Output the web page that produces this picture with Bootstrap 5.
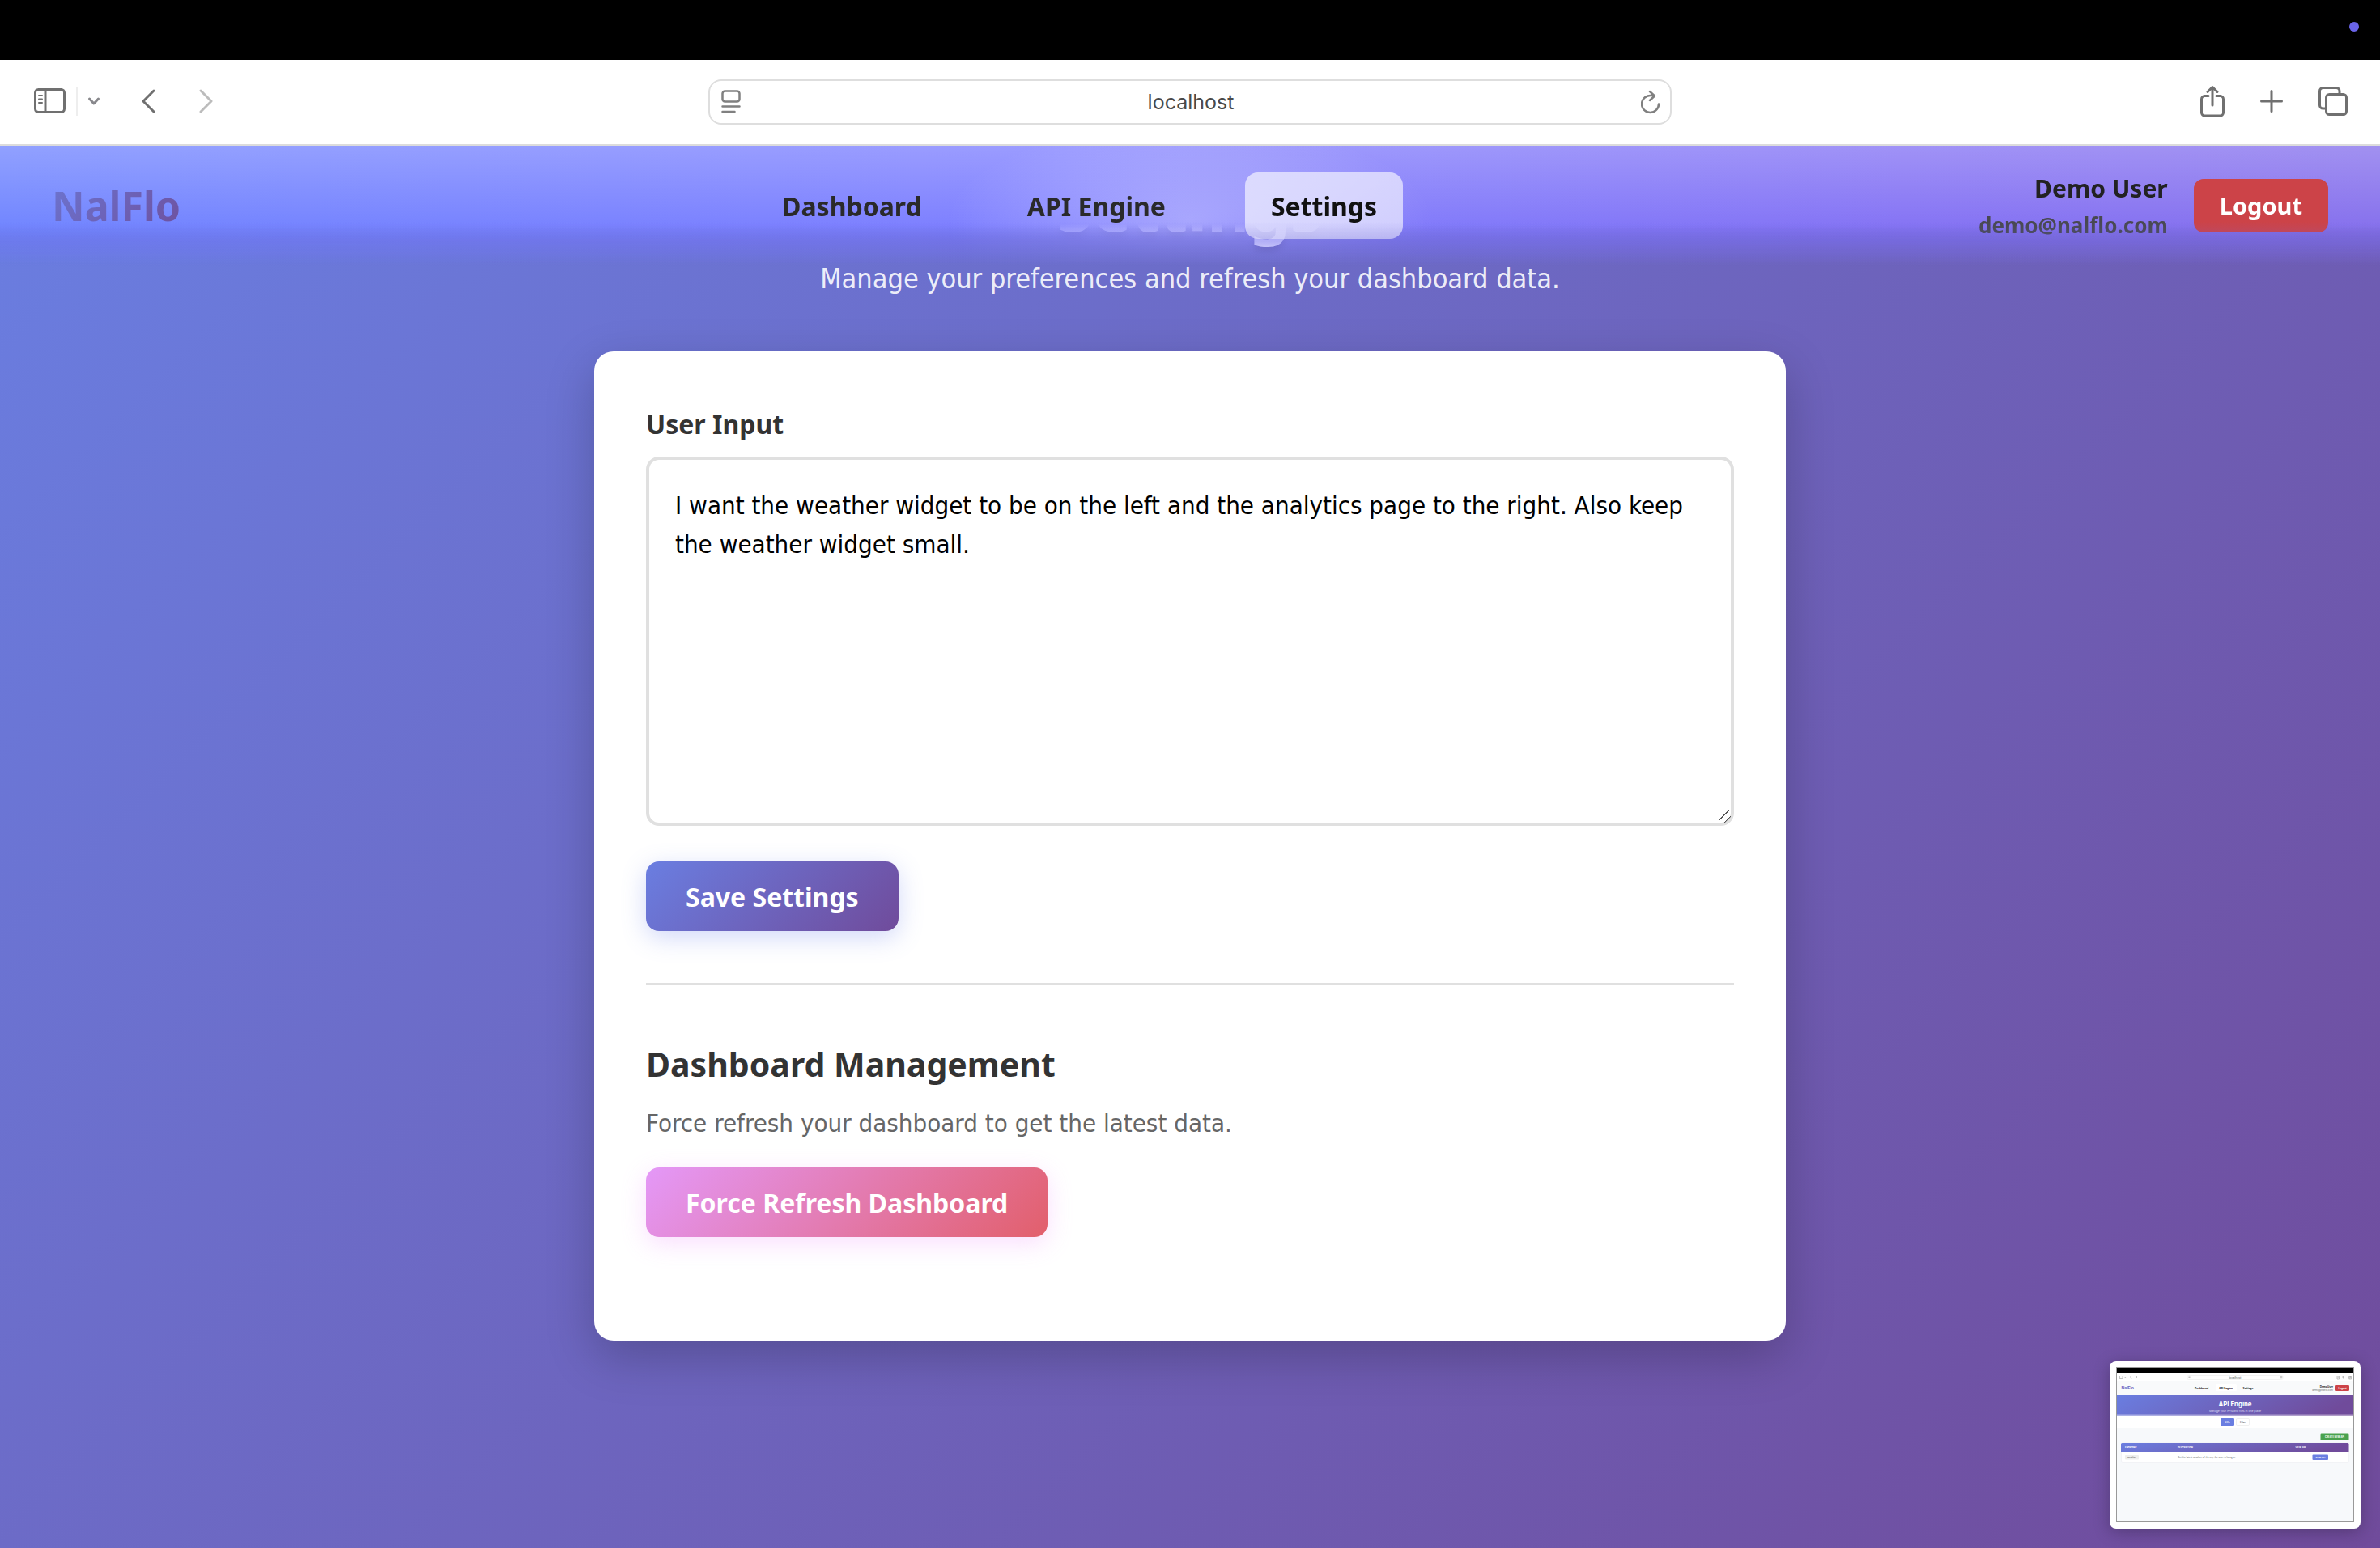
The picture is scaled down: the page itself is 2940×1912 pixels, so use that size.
<!DOCTYPE html>
<html lang="en">
<head>
<meta charset="utf-8">
<meta name="viewport" content="width=device-width, initial-scale=1">
<title>NalFlo – Settings</title>
<link href="https://cdn.jsdelivr.net/npm/bootstrap@5.3.0/dist/css/bootstrap.min.css" rel="stylesheet">
<style>
  :root {
    --text-face: "DejaVu Sans Condensed", "Noto Sans", sans-serif;
    --bold-face: "Noto Sans", "Open Sans", sans-serif;
  }
  body { font-family: var(--text-face); font-size: 31px; line-height: 50px; color: #333; font-variant-ligatures: none; }

  /* Browser chrome */
  .menu-strip { height: 74px; padding-right: 26px; }
  .rec-dot { width: 12px; height: 12px; background: #6a64e8; }
  .browser-bar { display: grid; grid-template-columns: 1fr 1190px 1fr; height: 106px; padding: 24px 40px 0; border-bottom: 2px solid #dcdcdc; align-items: start; }
  .browser-bar svg { display: block; fill: none; stroke: #707070; stroke-width: 3; stroke-linecap: round; stroke-linejoin: round; }
  .tool-btn { background: none; border: 0; padding: 0; }
  .tool-row { height: 54px; }
  .tool-set { gap: 44px; }
  .bar-rule { width: 2px; height: 36px; background: #eee; margin-left: 13px; margin-right: 12px; }
  .url-box { height: 56px; border: 2px solid #dedede; border-radius: 16px; padding: 0 12px 0 14px; }
  .url-box svg { stroke: #808080; }
  .url-box input { border: 0; outline: 0; background: none; min-width: 0; font: 25px/36px Inter, sans-serif; color: #4a4a4a; }

  /* Page and translucent nav */
  .app-page { background: linear-gradient(135deg, #6a7ee1 0%, #704b9b 100%); }
  .app-nav { height: 148px; padding: 0 64px; z-index: 5; }
  .nav-glass { position: absolute; inset: 0 0 auto 0; height: 97px; backdrop-filter: blur(28px); }
  .nav-tint { position: absolute; inset: 0;
    background:
      radial-gradient(ellipse 300px 120px at 50% 92px, rgba(255,255,255,.30), rgba(255,255,255,0)),
      linear-gradient(rgba(255,255,255,.24), rgba(255,255,255,0) 112px),
      linear-gradient(90deg, #6e83ff, #7c7cff 45%, #8270f4 80%, #846eec);
    mask-image: linear-gradient(#000 97px, rgba(0,0,0,.66) 112px, rgba(0,0,0,.36) 126px, transparent 148px);
    -webkit-mask-image: linear-gradient(#000 97px, rgba(0,0,0,.66) 112px, rgba(0,0,0,.36) 126px, transparent 148px); }
  .nav-fade { position: absolute; inset: 0; pointer-events: none; background: linear-gradient(rgba(110,104,225,0) 94px, rgba(110,104,225,.24) 118px, rgba(110,104,225,0) 148px); }
  .brand { font: 700 50px/82px var(--bold-face); background: linear-gradient(135deg, #6c76d2, #6e4f9c); background-clip: text; -webkit-background-clip: text; color: transparent; text-decoration: none; }
  .main-links { gap: 66px; }
  .main-links a { font: 700 32px/50px var(--bold-face); color: #2a2a2a; padding: 17px 32px 15px; border-radius: 16px; text-decoration: none; }
  .main-links a.active { color: #111; background: rgba(255,255,255,.62); }
  .user-name { font: 700 30px/48px var(--bold-face); color: #222; }
  .user-mail { font: 700 26px/42px var(--bold-face); color: #484850; }
  .logout-btn { font: 700 29px/42px var(--bold-face); color: #fff; background: #cc4348; border: 0; border-radius: 12px; padding: 12px 32px; }

  /* Settings content */
  .settings-main { padding: 27px 0 120px; }
  .settings-main h1 { font: 700 80px/96px var(--bold-face); color: #fff; margin: 0; text-shadow: 0 4px 8px rgba(0,0,0,.2); }
  .sub-line { font-size: 34px; line-height: 54px; color: rgba(255,255,255,.9); margin: 14px 0 63px; }
  .settings-card { width: 1472px; max-width: 96%; background: #fff; border-radius: 24px; padding: 64px; box-shadow: 0 20px 60px rgba(0,0,0,.22); }
  .field-label { font: 700 32px/52px var(--bold-face); margin-bottom: 14px; display: block; }
  .pref-text { display: block; width: 100%; height: 456px; border: 4px solid #e0e0e0; border-radius: 16px; padding: 32px; font: 31px/48px var(--text-face); font-variant-ligatures: none; color: #000; resize: vertical; outline: 0; margin-bottom: 44px; }
  .pref-text::-webkit-resizer { background: linear-gradient(135deg, transparent 39%, #555 40%, #555 45%, transparent 46%, transparent 70%, #555 71%, #555 76%, transparent 77%); }
  .action-btn { font: 700 32px/50px var(--bold-face); color: #fff; border: 0; border-radius: 16px; padding: 19px 49px 17px; }
  .save-btn { background: linear-gradient(135deg, #6a7ee1, #704b9b); box-shadow: 0 8px 30px rgba(102,126,234,.3); }
  .refresh-btn { background: linear-gradient(135deg, #e498f8, #e25f6b); box-shadow: 0 8px 30px rgba(240,147,251,.3); }
  .manage-block { margin: 64px 0; border-top: 2px solid #e0e0e0; padding-top: 64px; }
  .manage-block h2 { font: 700 41px/68px var(--bold-face); margin: 0 0 14px; }
  .manage-block p { color: #666; margin: 0 0 30px; }

  /* Floating capture preview */
  .preview-thumb { position: absolute; right: 24px; bottom: 24px; width: 310px; height: 207px; border-radius: 8px; background: #fff; box-shadow: 0 4px 20px rgba(0,0,0,.25); z-index: 6; }
  .preview-thumb svg { display: block; font-family: Inter, sans-serif; }
</style>
</head>
<body class="d-flex flex-column min-vh-100 position-relative">

<div class="menu-strip bg-black d-flex justify-content-end align-items-center flex-shrink-0">
  <span class="rec-dot rounded-circle mb-2"></span>
</div>

<div class="browser-bar bg-white flex-shrink-0">
  <div class="tool-row d-flex align-items-center">
    <button class="tool-btn" aria-label="Show sidebar"><svg width="41" height="32" viewBox="-2 0 41 32"><rect x="1.500" y="1.500" width="36" height="28" rx="4"/><path d="M14 2v27"/><path stroke-width="2" d="M6 9h4M6 13.500h4M6 18h4"/></svg></button>
    <span class="bar-rule"></span>
    <button class="tool-btn" aria-label="Tab groups"><svg width="16" height="12" viewBox="0 0 16 12"><path stroke="#88888c" d="M2.500 3l5.500 6 5.500-6"/></svg></button>
    <button class="tool-btn ms-5" aria-label="Back"><svg width="20" height="32" viewBox="-1 0 20 32"><path d="M17 3L4 16l13 13"/></svg></button>
    <button class="tool-btn ms-5" aria-label="Forward"><svg class="ms-1" width="20" height="32" viewBox="-1 0 20 32"><path stroke="#bcbcbc" d="M3 3l13 13L3 29"/></svg></button>
  </div>
  <div class="url-box d-flex align-items-center">
    <svg width="24" height="30" viewBox="0 0 24 30"><rect x="1.500" y="1.500" width="21" height="13" rx="3" stroke-width="2.500"/><path stroke-width="2.500" d="M1.500 20.500h21M1.500 27h15"/></svg>
    <input class="flex-grow-1 text-center" type="text" value="localhost" aria-label="Address" readonly>
    <button class="tool-btn" aria-label="Reload"><svg width="24" height="30" viewBox="0 0 24 30"><path stroke-width="2.500" d="M22 17.500a10.500 10.500 0 1 1-10.500-10.500h4.500M11 2l6 5.500-6 5.500"/></svg></button>
  </div>
  <div class="tool-row tool-set d-flex align-items-center justify-content-end">
    <button class="tool-btn" aria-label="Share"><svg width="30" height="40" viewBox="0 0 30 40"><path d="M10 13.500H5.500a4 4 0 0 0-4 4V34a4 4 0 0 0 4 4h19a4 4 0 0 0 4-4V17.500a4 4 0 0 0-4-4H20M15 25V3M9 8.500L15 2.500l6 6"/></svg></button>
    <button class="tool-btn" aria-label="New tab"><svg width="28" height="28" viewBox="0 0 28 28"><path d="M14 1.500v25M1.500 14h25"/></svg></button>
    <button class="tool-btn" aria-label="Show tabs"><svg width="36" height="36" viewBox="0 0 36 36"><rect x="9.500" y="9.500" width="25" height="25" rx="4"/><path d="M9 27H5.500a4 4 0 0 1-4-4V5.500a4 4 0 0 1 4-4H22a4 4 0 0 1 4 4V9"/></svg></button>
  </div>
</div>

<div class="app-page flex-grow-1 position-relative">
  <header class="app-nav position-absolute top-0 start-0 w-100">
    <div class="nav-glass"></div>
    <div class="nav-tint"></div>
    <div class="position-relative h-100 d-flex align-items-center justify-content-between">
      <a class="brand" href="#">NalFlo</a>
      <nav class="main-links d-flex">
        <a href="#">Dashboard</a>
        <a href="#">API Engine</a>
        <a class="active" href="#" aria-current="page">Settings</a>
      </nav>
      <div class="d-flex align-items-center text-end">
        <div class="me-4 pe-2">
          <div class="user-name">Demo User</div>
          <div class="user-mail">demo@nalflo.com</div>
        </div>
        <button class="logout-btn" type="button">Logout</button>
      </div>
    </div>
    <div class="nav-fade"></div>
  </header>

  <main class="settings-main d-flex flex-column align-items-center">
    <h1>Settings</h1>
    <p class="sub-line">Manage your preferences and refresh your dashboard data.</p>

    <section class="settings-card">
      <form>
        <label class="field-label" for="userInput">User Input</label>
        <textarea class="pref-text" id="userInput" spellcheck="false">I want the weather widget to be on the left and the analytics page to the right. Also keep the weather widget small.</textarea>
        <button class="action-btn save-btn d-block" type="button">Save Settings</button>
      </form>
      <div class="manage-block mb-0 pb-5">
        <h2>Dashboard Management</h2>
        <p>Force refresh your dashboard to get the latest data.</p>
        <button class="action-btn refresh-btn d-block mb-3" type="button">Force Refresh Dashboard</button>
      </div>
    </section>
  </main>
</div>

<aside class="preview-thumb" aria-label="Capture preview">
  <svg width="310" height="207" viewBox="0 0 310 207">
    <defs>
      <linearGradient id="hero" x1="0" y1="0" x2="1" y2="0.150"><stop offset="0" stop-color="#6a7ee1"/><stop offset="1" stop-color="#704b9b"/></linearGradient>
    </defs>
    <rect x="8.500" y="8.500" width="293" height="190" fill="#f7f9fb" stroke="#999"/>
    <rect x="9" y="9" width="292" height="6" fill="#000"/>
    <rect x="9" y="15" width="292" height="10" fill="#fff"/>
    <rect x="9" y="25" width="292" height="17" fill="#f9fafb"/>
    <g fill="none" stroke="#aaa" stroke-width=".7">
      <rect x="12.500" y="18.500" width="3.500" height="3"/><path d="M18.500 20l.8.800.8-.8M27 18.500L25.500 20l1.500 1.500M32.500 18.500L34 20l-1.500 1.500"/>
      <rect x="96" y="17.500" width="118" height="5" rx="1.500" stroke="#eee"/>
      <path d="M97.500 19h2M97.500 20.500h2M281 19v3h2.500v-3M282.200 21v-3M287 20h3M288.500 18.500v3"/><circle cx="212" cy="20" r="1"/>
      <rect x="295" y="18.500" width="2.500" height="2.500"/><rect x="296" y="19.500" width="2.500" height="2.500"/>
    </g>
    <text x="155" y="21.500" font-size="3.500" text-anchor="middle" fill="#555">localhost</text>
    <text x="14.500" y="35" font-size="5" font-weight="700" fill="#6660c0">NalFlo</text>
    <rect x="131" y="29" width="26" height="8" rx="1.500" fill="#fff"/>
    <g font-size="3.200" font-weight="700" fill="#222" text-anchor="middle">
      <text x="113.500" y="34.500">Dashboard</text><text x="143.500" y="34.500">API Engine</text><text x="171" y="34.500">Settings</text>
    </g>
    <g text-anchor="end" font-size="3"><text x="276" y="32.500" font-weight="700" fill="#222">Demo User</text><text x="276" y="36.500" fill="#666">demo@nalflo.com</text></g>
    <rect x="279" y="30" width="17" height="7" rx="1.200" fill="#cc4348"/>
    <text x="287.500" y="34.500" font-size="3" font-weight="700" fill="#fff" text-anchor="middle">Logout</text>
    <rect x="9" y="42" width="292" height="26" fill="url(#hero)"/>
    <rect x="9" y="66.500" width="292" height="1.500" fill="#fff" opacity=".45"/>
    <text x="155" y="56" font-size="7.800" font-weight="700" fill="#fff" text-anchor="middle">API Engine</text>
    <text x="155" y="63" font-size="3.400" fill="#dcdcf4" text-anchor="middle">Manage your APIs and files in one place</text>
    <rect x="9" y="68" width="292" height="15" fill="#fff"/>
    <rect x="137" y="71" width="17" height="9" rx="1.200" fill="#6a7ee1"/>
    <rect x="156.500" y="71.500" width="16" height="8" rx="1.200" fill="#fff" stroke="#e4e4e4" stroke-width=".6"/>
    <g font-size="3.200" text-anchor="middle"><text x="145.500" y="76.700" fill="#fff">APIs</text><text x="164.500" y="76.700" fill="#555">Files</text></g>
    <rect x="260.500" y="89.500" width="35" height="8.500" rx="1.200" fill="#4aa24e"/>
    <text x="278" y="95" font-size="2.800" font-weight="700" fill="#fff" text-anchor="middle">CREATE NEW API</text>
    <rect x="14.500" y="101" width="281" height="24.500" rx="1.500" fill="#fff" stroke="#e8eaee" stroke-width=".5"/>
    <path d="M14 112v-9.500a1.500 1.500 0 0 1 1.500-1.500h278.500a1.500 1.500 0 0 1 1.500 1.500V112z" fill="url(#hero)"/>
    <g font-size="2.800" font-weight="700" fill="#fff"><text x="19" y="107.700">ENDPOINT</text><text x="84" y="107.700">DESCRIPTION</text><text x="229.500" y="107.700">VIEW API</text></g>
    <rect x="19" y="116" width="17" height="5.500" rx="1" fill="#eee"/>
    <g font-size="3.200"><text x="21" y="119.800" font-size="2.800" fill="#333">/weather</text><text x="84" y="120" font-size="2.900" fill="#555">Get the latest weather of the city the user is living in.</text></g>
    <rect x="250.500" y="115.500" width="19.500" height="6.500" rx="1" fill="#6a7ee1"/>
    <text x="260.200" y="119.800" font-size="2.600" font-weight="700" fill="#fff" text-anchor="middle">VIEW API</text>
  </svg>
</aside>

<script src="https://cdn.jsdelivr.net/npm/bootstrap@5.3.0/dist/js/bootstrap.bundle.min.js"></script>
</body>
</html>
